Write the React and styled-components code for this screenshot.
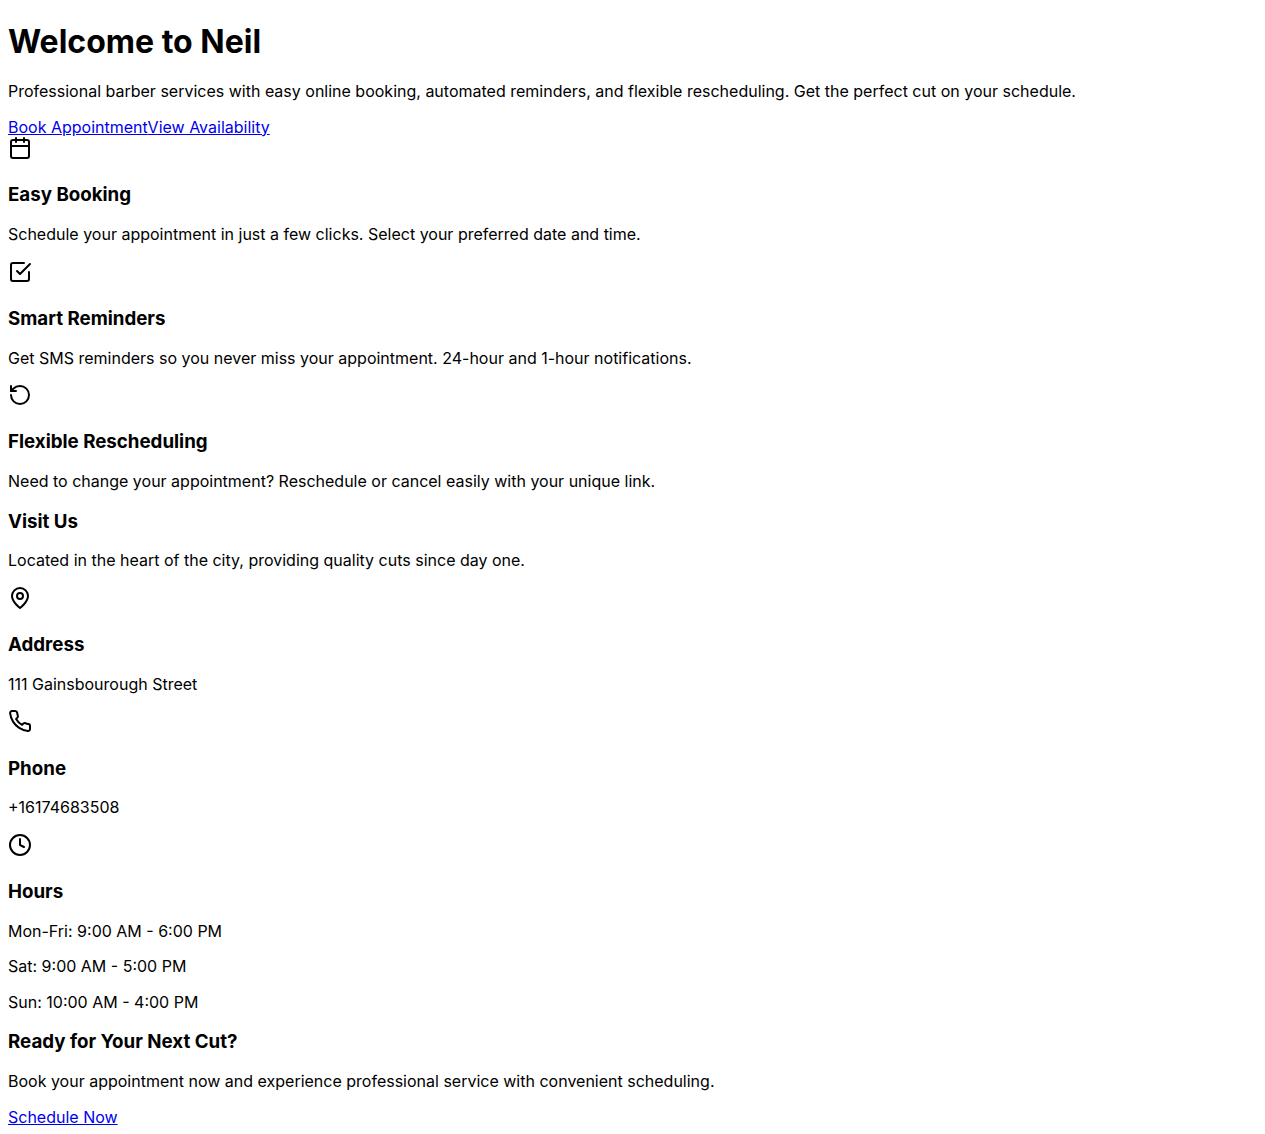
import React from "react";
import styled, { createGlobalStyle } from "styled-components";

const GlobalStyle = createGlobalStyle`
  body {
    margin: 8px;
    background: #fff;
    color: #000;
    font-family: Inter, sans-serif;
    font-size: 16px;
    line-height: 19.5px;
  }
`;

const Page = styled.main`
  display: flow-root;
`;

const Section = styled.section`
  display: block;
`;

const Title = styled.h1`
  margin: 13.74px 0 21.44px;
  font-size: 32px;
  line-height: 39px;
  font-weight: 700;
`;

const Heading = styled.h3`
  margin: 19.25px 0 18.19px;
  font-size: 18.72px;
  line-height: 22.5px;
  font-weight: 700;
`;

const Text = styled.p`
  margin: 16px 0;
`;

const Link = styled.a`
  color: #0000ee;
  text-decoration: underline;
  cursor: pointer;
`;

const Icon = styled.svg.attrs({
  width: 24,
  height: 24,
  viewBox: "0 0 24 24",
  fill: "none",
  stroke: "currentColor",
  strokeWidth: 2,
  strokeLinecap: "round",
  strokeLinejoin: "round",
})`
  display: block;
  margin-top: -1px;
`;

const IconBox = styled.div`
  display: flow-root;
  height: 28px;
`;

const icons = {
  calendar: (
    <>
      <rect x="3" y="4" width="18" height="18" rx="2" ry="2" />
      <line x1="16" y1="2" x2="16" y2="6" />
      <line x1="8" y1="2" x2="8" y2="6" />
      <line x1="3" y1="10" x2="21" y2="10" />
    </>
  ),
  check: (
    <>
      <path d="M9 11l3 3L22 4" />
      <path d="M21 12v7a2 2 0 0 1-2 2H5a2 2 0 0 1-2-2V5a2 2 0 0 1 2-2h11" />
    </>
  ),
  rotate: (
    <>
      <path d="M3 12a9 9 0 1 0 9-9 9.75 9.75 0 0 0-6.74 2.74L3 8" />
      <path d="M3 3v5h5" />
    </>
  ),
  pin: (
    <>
      <path d="M20 10c0 6-8 12-8 12s-8-6-8-12a8 8 0 0 1 16 0Z" />
      <circle cx="12" cy="10" r="3" />
    </>
  ),
  phone: (
    <path d="M22 16.92v3a2 2 0 0 1-2.18 2 19.79 19.79 0 0 1-8.63-3.07 19.5 19.5 0 0 1-6-6 19.79 19.79 0 0 1-3.07-8.67A2 2 0 0 1 4.11 2h3a2 2 0 0 1 2 1.72 12.84 12.84 0 0 0 .7 2.81 2 2 0 0 1-.45 2.11L8.09 9.91a16 16 0 0 0 6 6l1.27-1.27a2 2 0 0 1 2.11-.45 12.84 12.84 0 0 0 2.81.7A2 2 0 0 1 22 16.92z" />
  ),
  clock: (
    <>
      <circle cx="12" cy="12" r="10" />
      <polyline points="12 6 12 12 16 14" />
    </>
  ),
};

const features = [
  { icon: "calendar", title: "Easy Booking", lines: ["Schedule your appointment in just a few clicks. Select your preferred date and time."] },
  { icon: "check", title: "Smart Reminders", lines: ["Get SMS reminders so you never miss your appointment. 24-hour and 1-hour notifications."] },
  { icon: "rotate", title: "Flexible Rescheduling", lines: ["Need to change your appointment? Reschedule or cancel easily with your unique link."] },
];

const contacts = [
  { icon: "pin", title: "Address", lines: ["111 Gainsbourough Street"] },
  { icon: "phone", title: "Phone", lines: ["+16174683508"] },
  { icon: "clock", title: "Hours", lines: ["Mon-Fri: 9:00 AM - 6:00 PM", "Sat: 9:00 AM - 5:00 PM", "Sun: 10:00 AM - 4:00 PM"] },
];

function InfoBlock({ icon, title, lines }) {
  return (
    <Section>
      <IconBox>
        <Icon>{icons[icon]}</Icon>
      </IconBox>
      <Heading>{title}</Heading>
      {lines.map((line) => (
        <Text key={line}>{line}</Text>
      ))}
    </Section>
  );
}

export default function App() {
  return (
    <Page>
      <GlobalStyle />
      <Section>
        <Title>Welcome to Neil</Title>
        <Text>
          Professional barber services with easy online booking, automated reminders, and flexible rescheduling. Get the
          perfect cut on your schedule.
        </Text>
        <div>
          <Link href="#book">Book Appointment</Link>
          <Link href="#availability">View Availability</Link>
        </div>
      </Section>
      {features.map((item) => (
        <InfoBlock key={item.title} {...item} />
      ))}
      <Section>
        <Heading>Visit Us</Heading>
        <Text>Located in the heart of the city, providing quality cuts since day one.</Text>
      </Section>
      {contacts.map((item) => (
        <InfoBlock key={item.title} {...item} />
      ))}
      <Section>
        <Heading>Ready for Your Next Cut?</Heading>
        <Text>Book your appointment now and experience professional service with convenient scheduling.</Text>
        <Link href="#book">Schedule Now</Link>
      </Section>
    </Page>
  );
}
